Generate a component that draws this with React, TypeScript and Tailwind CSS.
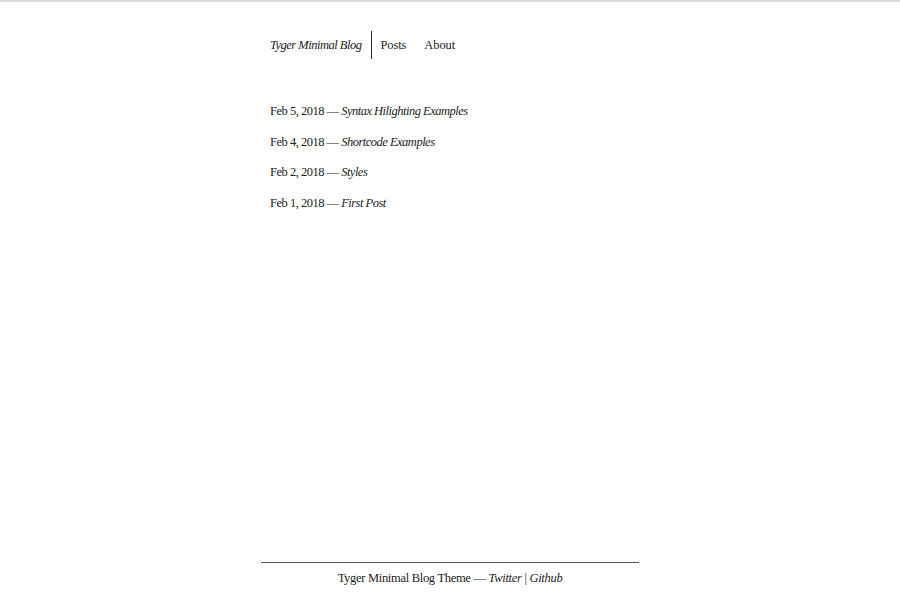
import React from 'react'

export default function App() {
  let POSTS = [
    { date: 'Feb 5, 2018', title: 'Syntax Hilighting Examples' },
    { date: 'Feb 4, 2018', title: 'Shortcode Examples' },
    { date: 'Feb 2, 2018', title: 'Styles' },
    { date: 'Feb 1, 2018', title: 'First Post' },
  ]

  return (
    <div
      className="min-h-screen flex flex-col border-t-2 border-[#dcdcdc] bg-white text-[#222]"
      style={{ fontFamily: '"Liberation Serif", "DejaVu Serif", serif' }}
    >
      <div className="w-[378px] mx-auto flex-1 px-[9px]">
        <header className="flex items-center mt-[29px] h-[28px] text-[12.5px]">
          <a className="italic pr-[10px] border-r border-[#333] h-full flex items-center tracking-[-0.5px]">Tyger Minimal Blog</a>
          <a className="pl-[8px] flex items-center tracking-[-0.1px]">Posts</a>
          <a className="pl-[18px] flex items-center tracking-[-0.1px]">About</a>
        </header>

        <ul className="mt-[43px] flex flex-col gap-[12px] text-[12.5px] tracking-[-0.5px]">
          {POSTS.map((p) => (
            <li key={p.date} className="leading-[18.5px]">
              {p.date} — <a className="italic">{p.title}</a>
            </li>
          ))}
        </ul>
      </div>

      <footer className="w-[378px] mx-auto border-t border-[#555] pt-[6px] pb-[12px] text-center text-[12.5px] tracking-[-0.3px]">
        Tyger Minimal Blog Theme — <a className="italic">Twitter</a> | <a className="italic">Github</a>
      </footer>
    </div>
  )
}
